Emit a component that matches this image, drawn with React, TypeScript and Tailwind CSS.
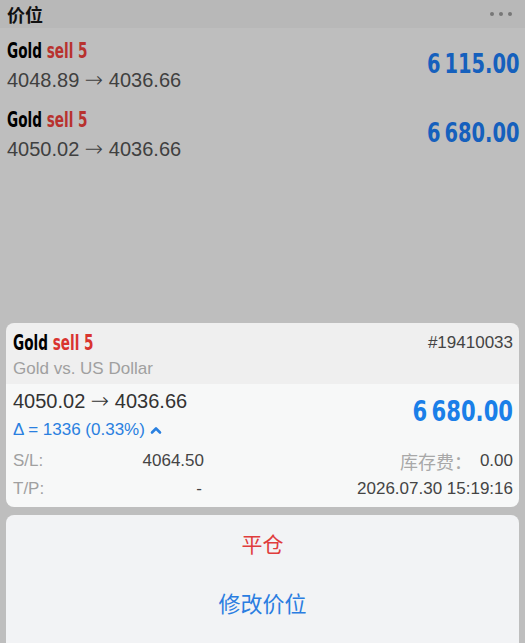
import React from 'react';

const cond = { fontFamily: '"DejaVu Sans", "Noto Sans", sans-serif' };
const sans = { fontFamily: '"Liberation Sans", Arial, "Noto Sans CJK SC", sans-serif' };
const cjk = { fontFamily: '"Noto Sans CJK SC", "Noto Sans", sans-serif' };
const arrowFont = { fontFamily: '"DejaVu Sans", sans-serif' };

type Row = { from: string; to: string; profit: string };

const rows: Row[] = [
  { from: '4048.89', to: '4036.66', profit: '6\u2009115.00' },
  { from: '4050.02', to: '4036.66', profit: '6\u2009680.00' },
];

function Title({ red }: { red: string }) {
  return (
    <div
      className="inline-block origin-left scale-x-[0.72] whitespace-nowrap text-[21px] font-bold leading-[24px] font-stretch-condensed"
      style={cond}
    >
      <span className="text-black">Gold</span> <span style={{ color: red }}>sell 5</span>
    </div>
  );
}

function Move({ from, to }: { from: string; to: string }) {
  return (
    <>
      {from} <span className="text-[22px] font-extralight" style={arrowFont}>→</span> {to}
    </>
  );
}

export default function App() {
  return (
    <div className="w-[525px] h-[643px] overflow-hidden bg-[#bebebe] flex flex-col" style={sans}>
      {/* Header */}
      <div className="h-[28px] shrink-0 bg-[#b8b8b8] flex items-center justify-between px-[7px]">
        <span className="text-[18px] font-bold text-[#111] leading-[28px]" style={cjk}>价位</span>
        <div className="flex gap-[5px] pr-[6px]">
          <span className="w-[4px] h-[4px] rounded-full bg-[#777]" />
          <span className="w-[4px] h-[4px] rounded-full bg-[#777]" />
          <span className="w-[4px] h-[4px] rounded-full bg-[#777]" />
        </div>
      </div>

      {/* Positions list */}
      <div className="flex flex-col">
        {rows.map((r, i) => (
          <div key={i} className="h-[69px] pl-[7px] pr-[6px] pt-[11px] flex justify-between items-start">
            <div>
              <Title red="#b8322e" />
              <div className="text-[20px] text-[#404040] leading-[24px] mt-[3px]">
                <Move from={r.from} to={r.to} />
              </div>
            </div>
            <div
              className="origin-right scale-x-[0.8] whitespace-nowrap text-[27px] font-bold leading-[32px] text-[#1560bd] mt-[9px] font-stretch-condensed"
              style={cond}
            >
              {r.profit}
            </div>
          </div>
        ))}
      </div>

      <div className="flex-1" />

      {/* Selected position card */}
      <div className="mx-[6px] rounded-[8px] overflow-hidden shrink-0">
        <div className="bg-[#efefef] pl-[7px] pr-[6px] pt-[8px] h-[61px]">
          <div className="flex justify-between items-start">
            <Title red="#d9342f" />
            <span className="text-[17px] leading-[20px] text-[#444] pt-[2px]">#19410033</span>
          </div>
          <div className="text-[17px] leading-[20px] text-[#a0a0a0] mt-[4px]">Gold vs. US Dollar</div>
        </div>
        <div className="bg-[#f7f8f8] pl-[7px] pr-[6px] pt-[5px] h-[123px]">
          <div className="flex justify-between items-start">
            <div>
              <div className="text-[20px] text-[#333] leading-[24px]">
                <Move from="4050.02" to="4036.66" />
              </div>
              <div className="text-[17px] leading-[20px] text-[#2a80e0] mt-[7px] flex items-center gap-[5px]">
                Δ = 1336 (0.33%)
                <svg width="12" height="10" viewBox="0 0 12 10" fill="none">
                  <path d="M2 7.5 L6 3.5 L10 7.5" stroke="#2a80e0" strokeWidth="2.6" strokeLinecap="round" strokeLinejoin="round" />
                </svg>
              </div>
            </div>
            <div
              className="origin-right scale-x-[0.81] whitespace-nowrap text-[29px] font-bold leading-[32px] text-[#1a7fe8] mt-[6px] font-stretch-condensed"
              style={cond}
            >
              6{'\u2009'}680.00
            </div>
          </div>
          <div className="grid grid-cols-2 mt-[11px] text-[17px] leading-[20px] gap-y-[8px]">
            <div className="flex justify-between w-[191px]">
              <span className="text-[#a0a0a0]">S/L:</span>
              <span className="text-[#444]">4064.50</span>
            </div>
            <div className="flex justify-end items-center gap-[8px]">
              <span className="text-[18px] text-[#a8a8a8]" style={cjk}>库存费：</span>
              <span className="text-[#444]">0.00</span>
            </div>
            <div className="flex justify-between w-[191px]">
              <span className="text-[#a0a0a0]">T/P:</span>
              <span className="text-[#444] pr-[2px]">-</span>
            </div>
            <div className="flex justify-end">
              <span className="text-[#444]">2026.07.30 15:19:16</span>
            </div>
          </div>
        </div>
      </div>

      {/* Action sheet */}
      <div className="mx-[6px] mt-[8px] h-[128px] shrink-0 bg-[#f2f3f5] rounded-t-[8px] flex flex-col items-center pt-[12px]" style={cjk}>
        <button className="text-[21px] leading-[32px] text-[#e03c3c]">平仓</button>
        <button className="text-[22px] leading-[32px] text-[#2a7de1] mt-[27px]">修改价位</button>
      </div>
    </div>
  );
}
